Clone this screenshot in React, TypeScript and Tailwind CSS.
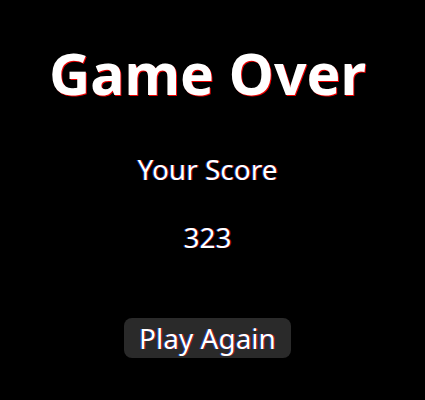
export default function App() {
  return (
    <div className="min-h-screen bg-black text-white flex flex-col items-center pr-[10px] font-['Noto_Sans',sans-serif]">
      <h1 className="mt-[37px] text-[57px] leading-[72px] font-bold [text-shadow:1px_1px_0_#e00]">
        Game Over
      </h1>
      <p className="mt-[42px] text-[28px] leading-[36px] [text-shadow:1px_0_0_rgba(255,0,0,0.6),-1px_0_0_rgba(0,80,255,0.6)]">
        Your Score
      </p>
      <p className="mt-[32px] text-[28px] leading-[36px] [text-shadow:1px_0_0_rgba(255,0,0,0.6),-1px_0_0_rgba(0,80,255,0.6)]">
        323
      </p>
      <button className="mt-[63px] h-[40px] px-[15px] rounded-lg bg-[#2a2a2a] text-[28px] leading-none [text-shadow:1px_0_0_rgba(255,0,0,0.6),-1px_0_0_rgba(0,80,255,0.6)]">
        Play Again
      </button>
    </div>
  );
}
